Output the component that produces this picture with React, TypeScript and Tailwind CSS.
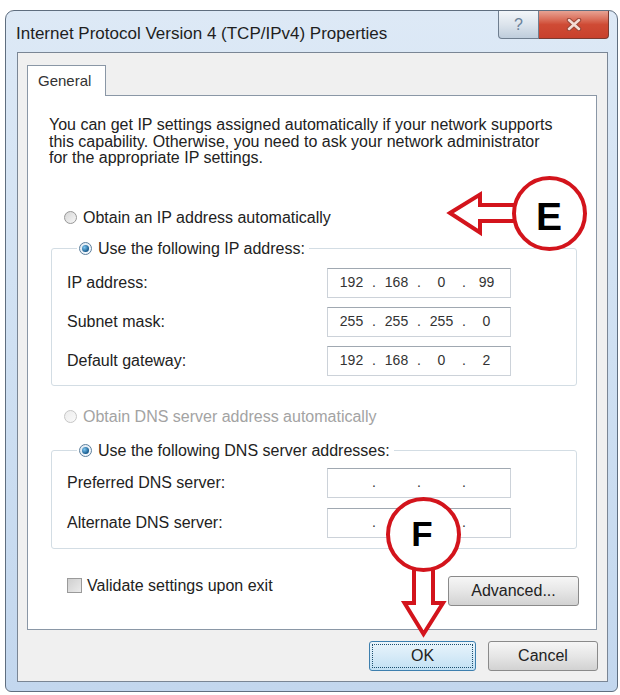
import React from "react";

const font = { fontFamily: '"Liberation Sans", Arial, sans-serif' };

type RadioProps = { checked?: boolean; disabled?: boolean };

const Radio: React.FC<RadioProps> = ({ checked, disabled }) => (
  <span
    className={`flex h-[13px] w-[13px] shrink-0 items-center justify-center rounded-full border ${
      disabled
        ? "border-[#c6c6c6] bg-gradient-to-br from-[#ececec] to-[#fafafa]"
        : checked
        ? "border-[#5d7f9c] bg-gradient-to-br from-[#dfe9f2] to-[#f7fbff]"
        : "border-[#979797] bg-gradient-to-br from-[#d6d6d6] to-[#f7f7f7]"
    }`}
  >
    {checked && (
      <span className="h-[7px] w-[7px] rounded-full bg-[radial-gradient(circle_at_35%_35%,#7cc6f2,#175a8c_70%)]" />
    )}
  </span>
);

const RadioRow: React.FC<{ label: string; checked?: boolean; disabled?: boolean }> = ({
  label,
  checked,
  disabled,
}) => (
  <span className="flex h-[20px] items-center gap-[6px]">
    <Radio checked={checked} disabled={disabled} />
    <span className={`whitespace-nowrap text-[16px] leading-[20px] ${disabled ? "text-[#a3a3a3]" : "text-[#222]"}`}>
      {label}
    </span>
  </span>
);

// four octet fields separated by dots, like the Win7 IP control
const IpBox: React.FC<{ parts: string[] }> = ({ parts }) => (
  <div className="flex h-[30px] w-[184px] items-center border border-[#ccd2d9] border-t-[#a0a8b1] bg-white pl-[5px] text-[14px] text-[#333]">
    {parts.map((p, i) => (
      <React.Fragment key={i}>
        <span className="w-[37px] text-center">{p}</span>
        {i < 3 && <span className="w-[8px] text-center">.</span>}
      </React.Fragment>
    ))}
  </div>
);

const Row: React.FC<{ label: string; parts: string[] }> = ({ label, parts }) => (
  <div className="flex h-[30px] items-center">
    <span className="w-[260px] text-[16px] text-[#222]">{label}</span>
    <IpBox parts={parts} />
  </div>
);

export default function App() {
  return (
    <div className="relative h-[695px] w-[620px] overflow-hidden bg-white pl-[5px] pt-[10px]" style={font}>
      {/* window frame */}
      <div className="w-[613px] rounded-t-[9px] rounded-b-[6px] border border-[#5f6e7f] bg-gradient-to-b from-[#dde9f6] via-[#cfe0f2] to-[#c3d7ee]">
        {/* title bar */}
        <div className="flex h-[41px] items-start justify-between pl-[10px] pr-[8px]">
          <span className="pt-[13px] text-[17px] leading-[20px] text-[#1e1e1e]">
            Internet Protocol Version 4 (TCP/IPv4) Properties
          </span>
          <div className="flex h-[28px]">
            <div className="flex w-[41px] items-center justify-center rounded-bl-[4px] border border-t-0 border-[#6f7e8f] bg-gradient-to-b from-[#f2f6fa] via-[#dce4ec] to-[#bfcddc] text-[16px] text-[#6a819a]">
              ?
            </div>
            <div className="flex w-[70px] items-center justify-center rounded-br-[4px] border border-l-0 border-t-0 border-[#7a3a30] bg-gradient-to-b from-[#e7a293] via-[#cf4b35] to-[#c8402c]">
              <svg width="16" height="13" viewBox="0 0 16 13">
                <path d="M3 2 L13 11 M13 2 L3 11" stroke="#9a4638" strokeWidth="4.5" strokeLinecap="round" />
                <path d="M3 2 L13 11 M13 2 L3 11" stroke="#f3dcd6" strokeWidth="2.5" strokeLinecap="round" />
              </svg>
            </div>
          </div>
        </div>

        {/* client area */}
        <div className="mb-[9px] ml-[11px] w-[591px] border border-[#7a8695] bg-[#f0f0f0] px-[9px] pb-[10px] pt-[12px]">
          <div className="relative z-10 -mb-px flex h-[31px] w-[79px] items-center border border-b-0 border-[#8a97a6] bg-white pl-[10px] text-[15px] text-[#333]">
            General
          </div>
          <div className="mr-px border border-[#8a97a6] bg-white pb-[23px] pl-[21px] pr-[17px] pt-[21px]">
            <p className="text-[16px] leading-[16.5px] text-[#222]">
              You can get IP settings assigned automatically if your network supports
              <br />
              this capability. Otherwise, you need to ask your network administrator
              <br />
              for the appropriate IP settings.
            </p>

            <div className="ml-[15px] mt-[41px]">
              <RadioRow label="Obtain an IP address automatically" />
            </div>

            <fieldset className="ml-[2px] mr-[2px] mt-[11px] rounded-[3px] border border-[#d3dde4] pb-[9px] pl-[15px] pt-[9px]">
              <legend className="ml-[10px] pl-[2px] pr-[4px]">
                <RadioRow label="Use the following IP address:" checked />
              </legend>
              <div className="flex flex-col gap-[9px]">
                <Row label="IP address:" parts={["192", "168", "0", "99"]} />
                <Row label="Subnet mask:" parts={["255", "255", "255", "0"]} />
                <Row label="Default gateway:" parts={["192", "168", "0", "2"]} />
              </div>
            </fieldset>

            <div className="ml-[15px] mt-[21px]">
              <RadioRow label="Obtain DNS server address automatically" disabled />
            </div>

            <fieldset className="ml-[2px] mr-[2px] mt-[14px] rounded-[3px] border border-[#d3dde4] pb-[10px] pl-[15px] pt-[7px]">
              <legend className="ml-[10px] pl-[2px] pr-[4px]">
                <RadioRow label="Use the following DNS server addresses:" checked />
              </legend>
              <div className="flex flex-col gap-[10px]">
                <Row label="Preferred DNS server:" parts={["", "", "", ""]} />
                <Row label="Alternate DNS server:" parts={["", "", "", ""]} />
              </div>
            </fieldset>

            <div className="mt-[27px] flex items-start justify-between pl-[18px]">
              <span className="flex h-[20px] items-center gap-[5px]">
                <span className="h-[15px] w-[15px] border border-[#9a9a9a] bg-gradient-to-br from-[#cfcfcf] to-[#ebebeb]" />
                <span className="text-[16px] text-[#222]">Validate settings upon exit</span>
              </span>
              <button className="h-[30px] w-[131px] rounded-[3px] border border-[#8a8a8a] bg-gradient-to-b from-[#f6f6f6] via-[#e6e6e6] to-[#d2d2d2] text-[16px] text-[#222]">
                Advanced...
              </button>
            </div>
          </div>

          <div className="mt-[11px] flex justify-end gap-[12px]">
            <button className="flex h-[30px] w-[107px] items-center justify-center rounded-[3px] border border-[#3d7fae] bg-gradient-to-b from-[#eaf5fc] to-[#c2e0f3] p-[2px] text-[16px] text-[#222]">
              <span className="flex h-full w-full items-center justify-center border border-dotted border-[#1d4f6e]">OK</span>
            </button>
            <button className="h-[30px] w-[110px] rounded-[3px] border border-[#8a8a8a] bg-gradient-to-b from-[#f6f6f6] via-[#e6e6e6] to-[#d2d2d2] text-[16px] text-[#222]">
              Cancel
            </button>
          </div>
        </div>
      </div>

      {/* red callouts drawn over the dialog */}
      <svg className="pointer-events-none absolute left-0 top-0" width="620" height="695" viewBox="0 0 620 695">
        <g stroke="#d3141c" strokeWidth="4" fill="#fff" strokeLinejoin="miter">
          <polygon points="450,213 480,194.5 480,205 520,205 520,221 480,221 480,232.5" />
          <circle cx="549.5" cy="213.5" r="35.5" />
          <polygon points="414,560 433,560 433,603 443,603 423.5,634 404.5,603 414,603" />
          <circle cx="423.5" cy="534.5" r="35.5" />
        </g>
        <text x="549" y="230" textAnchor="middle" fontSize="39" fontWeight="bold" fill="#000" fontFamily="Liberation Sans, Arial, sans-serif">
          E
        </text>
        <text x="422" y="546" textAnchor="middle" fontSize="35" fontWeight="bold" fill="#000" fontFamily="Liberation Sans, Arial, sans-serif">
          F
        </text>
      </svg>
    </div>
  );
}
